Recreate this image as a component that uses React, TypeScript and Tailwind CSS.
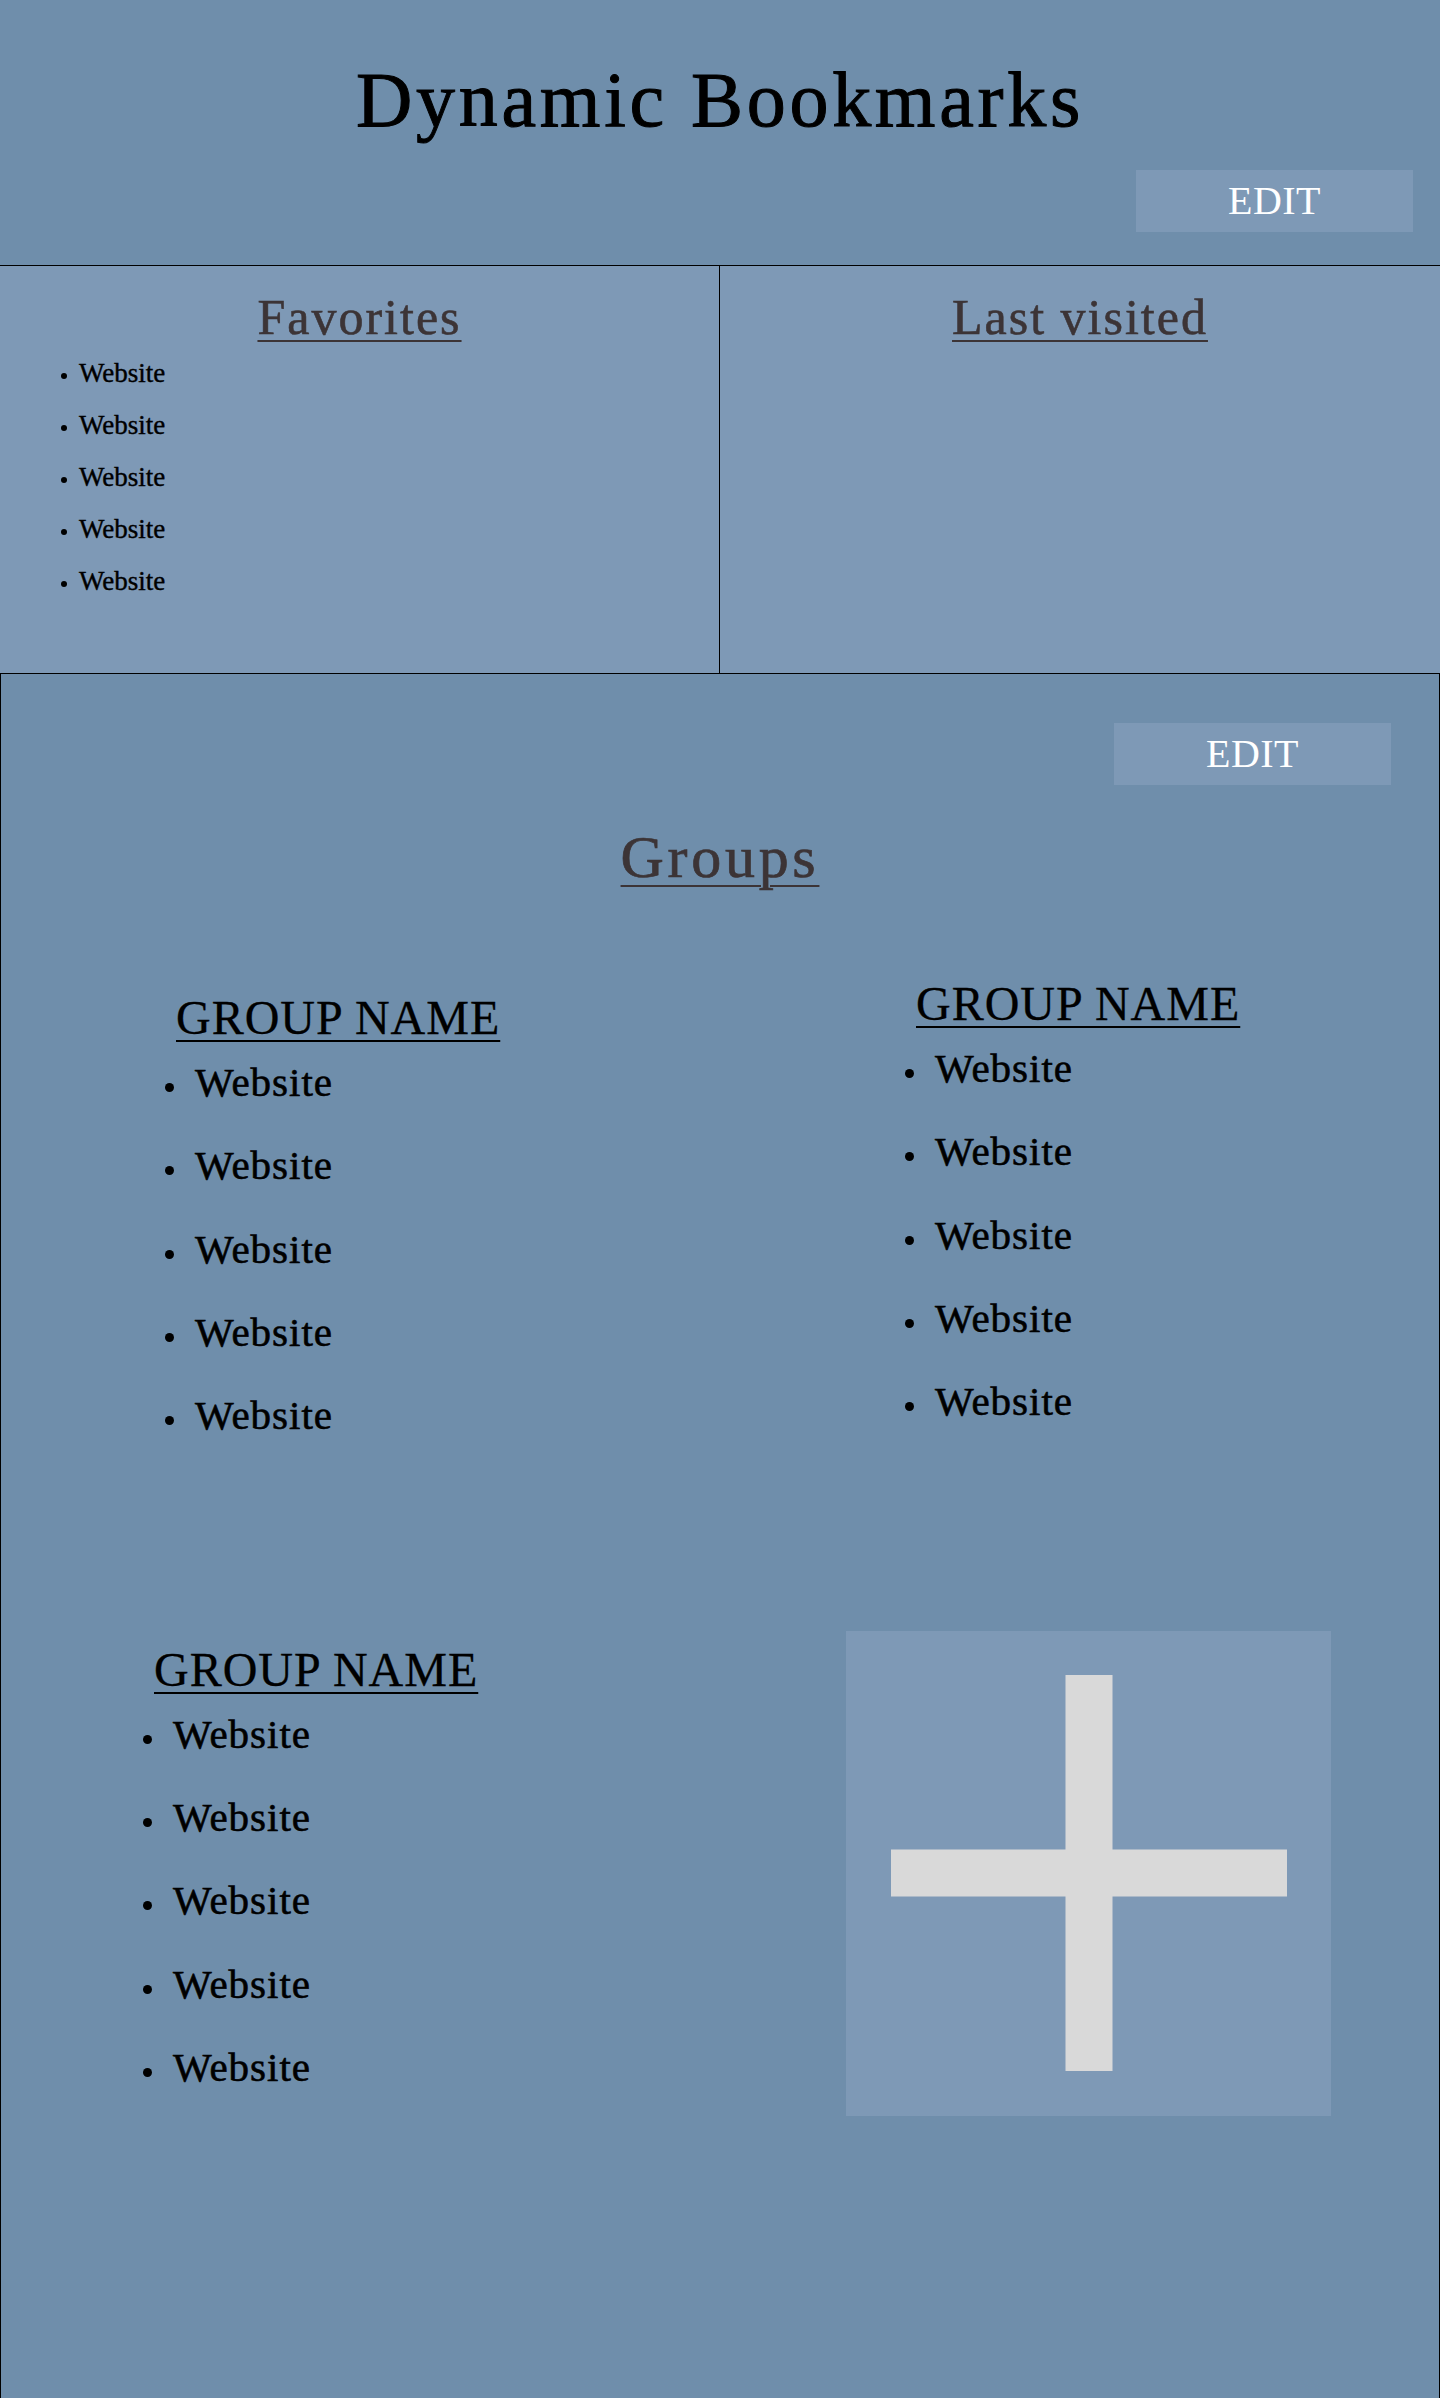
import React from "react";

function Dot({ cls }: { cls: string }) {
  return <span className={cls} />;
}

function SmallList() {
  const items = ["Website", "Website", "Website", "Website", "Website"];
  return (
    <ul className="mt-[5px] pl-[61px]">
      {items.map((t, i) => (
        <li key={i} className="flex items-start h-[52px] leading-[52px] text-[27px] text-black [-webkit-text-stroke:0.4px_black]">
          <Dot cls="mt-[26px] w-[6px] h-[6px] rounded-full bg-black shrink-0" />
          <span className="ml-[12px]">{t}</span>
        </li>
      ))}
    </ul>
  );
}

function Group({ cls }: { cls: string }) {
  const items = ["Website", "Website", "Website", "Website", "Website"];
  return (
    <div className={cls}>
      <h3 className="ml-[11px] text-[48px] leading-[46px] tracking-[1px] text-black underline underline-offset-[6px] decoration-2 [-webkit-text-stroke:0.3px_black]">
        GROUP NAME
      </h3>
      <ul>
        {items.map((t, i) => (
          <li key={i} className="flex items-start h-[83.33px] leading-[83.33px] text-[41px] tracking-[1px] text-black [-webkit-text-stroke:0.6px_black]">
            <Dot cls="mt-[42px] w-[9px] h-[9px] rounded-full bg-black shrink-0" />
            <span className="ml-[21px]">{t}</span>
          </li>
        ))}
      </ul>
    </div>
  );
}

export default function App() {
  return (
    <div className="min-h-screen flex flex-col bg-[#6f8eab] font-['Liberation_Serif',serif]">
      <header className="flex flex-col items-center pt-[61px] pb-[33px] border-b border-black">
        <h1 className="text-[78px] leading-none tracking-[3.7px] text-black [-webkit-text-stroke:1px_black]">Dynamic Bookmarks</h1>
        <button className="self-end mr-[27px] mt-[31px] w-[277px] h-[62px] flex items-center justify-center bg-[#7e99b6]">
          <span className="text-[40px] leading-none tracking-[0.5px] text-white">EDIT</span>
        </button>
      </header>

      <section className="grid grid-cols-2 h-[407px] bg-[#7e99b6]">
        <div className="border-r border-black pt-[26px]">
          <h2 className="text-center text-[50px] leading-none tracking-[2px] text-[#3c3436] underline underline-offset-[6px] decoration-2 [-webkit-text-stroke:0.6px_#3c3436]">
            Favorites
          </h2>
          <SmallList />
        </div>
        <div className="pt-[26px]">
          <h2 className="text-center text-[50px] leading-none tracking-[2px] text-[#3c3436] underline underline-offset-[6px] decoration-2 [-webkit-text-stroke:0.6px_#3c3436]">
            Last visited
          </h2>
        </div>
      </section>

      <section className="flex-1 flex flex-col border-t border-l border-r border-black pt-[49px]">
        <button className="self-end mr-[48px] w-[277px] h-[62px] flex items-center justify-center bg-[#7e99b6]">
          <span className="text-[40px] leading-none tracking-[0.5px] text-white">EDIT</span>
        </button>
        <h2 className="mt-[42px] text-center text-[60px] leading-none tracking-[3.7px] text-[#3c3436] underline underline-offset-[8px] decoration-2 [-webkit-text-stroke:0.7px_#3c3436]">
          Groups
        </h2>
        <div className="grid grid-cols-2 items-start">
          <Group cls="mt-[108px] ml-[164px]" />
          <Group cls="mt-[94px] ml-[185px]" />
          <Group cls="mt-[189px] ml-[142px]" />
          <div className="mt-[173px] ml-[126px] w-[485px] h-[485px] bg-[#7e99b6] flex items-center justify-center">
            <svg width="396" height="396" viewBox="0 0 396 396">
              <rect x="174.5" y="0" width="47" height="396" fill="#d9d9d9" />
              <rect x="0" y="174.5" width="396" height="47" fill="#d9d9d9" />
            </svg>
          </div>
        </div>
      </section>
    </div>
  );
}
